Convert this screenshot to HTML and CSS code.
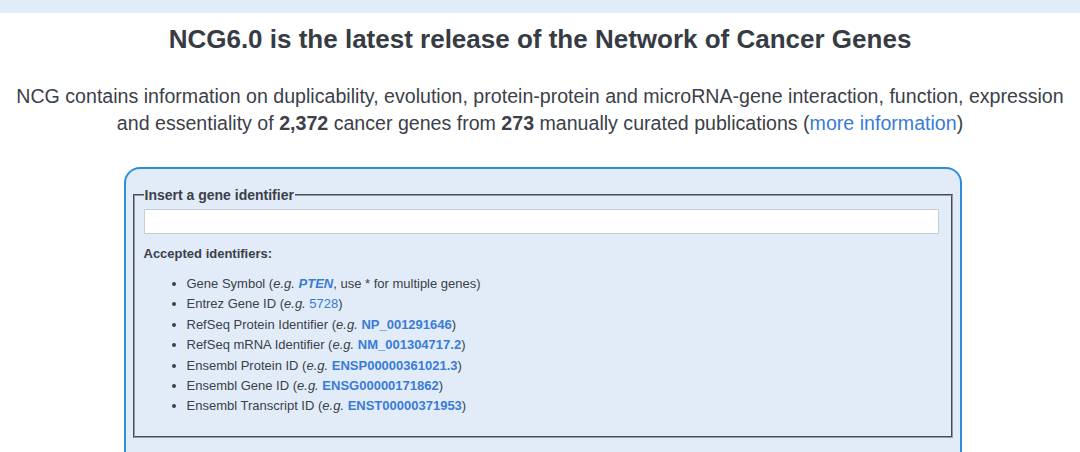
FILE: index.html
```html
<!DOCTYPE html>
<html>
<head>
    <title>NCG - Network of Cancer Genes</title>
    <meta name="viewport" content="width=device-width, initial-scale=1.0">
    <link rel="stylesheet" href="styles.css">
</head>
<body>
    <div class="top-bar"></div>

    <div class="container">
        <h1>NCG6.0 is the latest release of the Network of Cancer Genes</h1>

        <p class="intro">
            NCG contains information on duplicability, evolution, protein-protein and microRNA-gene interaction, function, expression
            and essentiality of <b>2,372</b> cancer genes from <b>273</b> manually curated publications (<a href="#">more information</a>)
        </p>

        <div class="search-box">
            <fieldset>
                <legend>Insert a gene identifier</legend>
                <input type="text" class="gene-input">

                <p class="accepted">Accepted identifiers:</p>
                <ul class="id-list">
                    <li>Gene Symbol (<i>e.g.</i> <a href="#"><b><i>PTEN</i></b></a>, use * for multiple genes)</li>
                    <li>Entrez Gene ID (<i>e.g.</i> <a href="#">5728</a>)</li>
                    <li>RefSeq Protein Identifier (<i>e.g.</i> <a href="#"><b>NP_001291646</b></a>)</li>
                    <li>RefSeq mRNA Identifier (<i>e.g.</i> <a href="#"><b>NM_001304717.2</b></a>)</li>
                    <li>Ensembl Protein ID (<i>e.g.</i> <a href="#"><b>ENSP00000361021.3</b></a>)</li>
                    <li>Ensembl Gene ID (<i>e.g.</i> <a href="#"><b>ENSG00000171862</b></a>)</li>
                    <li>Ensembl Transcript ID (<i>e.g.</i> <a href="#"><b>ENST00000371953</b></a>)</li>
                </ul>
            </fieldset>
        </div>
    </div>
</body>
</html>
```

FILE: styles.css
```css
* {
    margin: 0;
    padding: 0;
    box-sizing: border-box;
}

body {
    background: #fff;
    color: #3b4049;
    font-family: "Liberation Sans", Arial, sans-serif;
}

a {
    color: #3a7bd8;
    text-decoration: none;
}

.top-bar {
    height: 13px;
    background: #e1ecf8;
}

.container {
    display: flex;
    flex-direction: column;
    align-items: center;
}

h1 {
    font-size: 26px;
    font-weight: bold;
    margin-top: 11px;
    line-height: 30px;
    color: #363b44;
}

.intro {
    font-size: 19.6px;
    line-height: 27px;
    text-align: center;
    margin-top: 29px;
    padding: 0 8px;
}

.search-box {
    width: 838px;
    margin-top: 30px;
    margin-left: 5px;
    background: #e1ecf8;
    border: 2px solid #2d8ed6;
    border-bottom: none;
    border-radius: 16px 16px 0 0;
    padding: 18px 7px 14px 7px;
    height: 300px;
}

fieldset {
    border: 2px groove #959ba4;
    padding: 6px 12px 19px 9px;
}

legend {
    font-size: 14px;
    font-weight: bold;
    padding: 0 1px;
}

.gene-input {
    display: block;
    width: 100%;
    height: 25px;
    border: 1px solid #c9ced4;
    background: #fff;
    font-size: 13px;
}

.accepted {
    font-size: 13px;
    font-weight: bold;
    margin-top: 12px;
}

.id-list {
    margin-top: 13px;
    padding-left: 43px;
    font-size: 13px;
    line-height: 20.4px;
}
```
